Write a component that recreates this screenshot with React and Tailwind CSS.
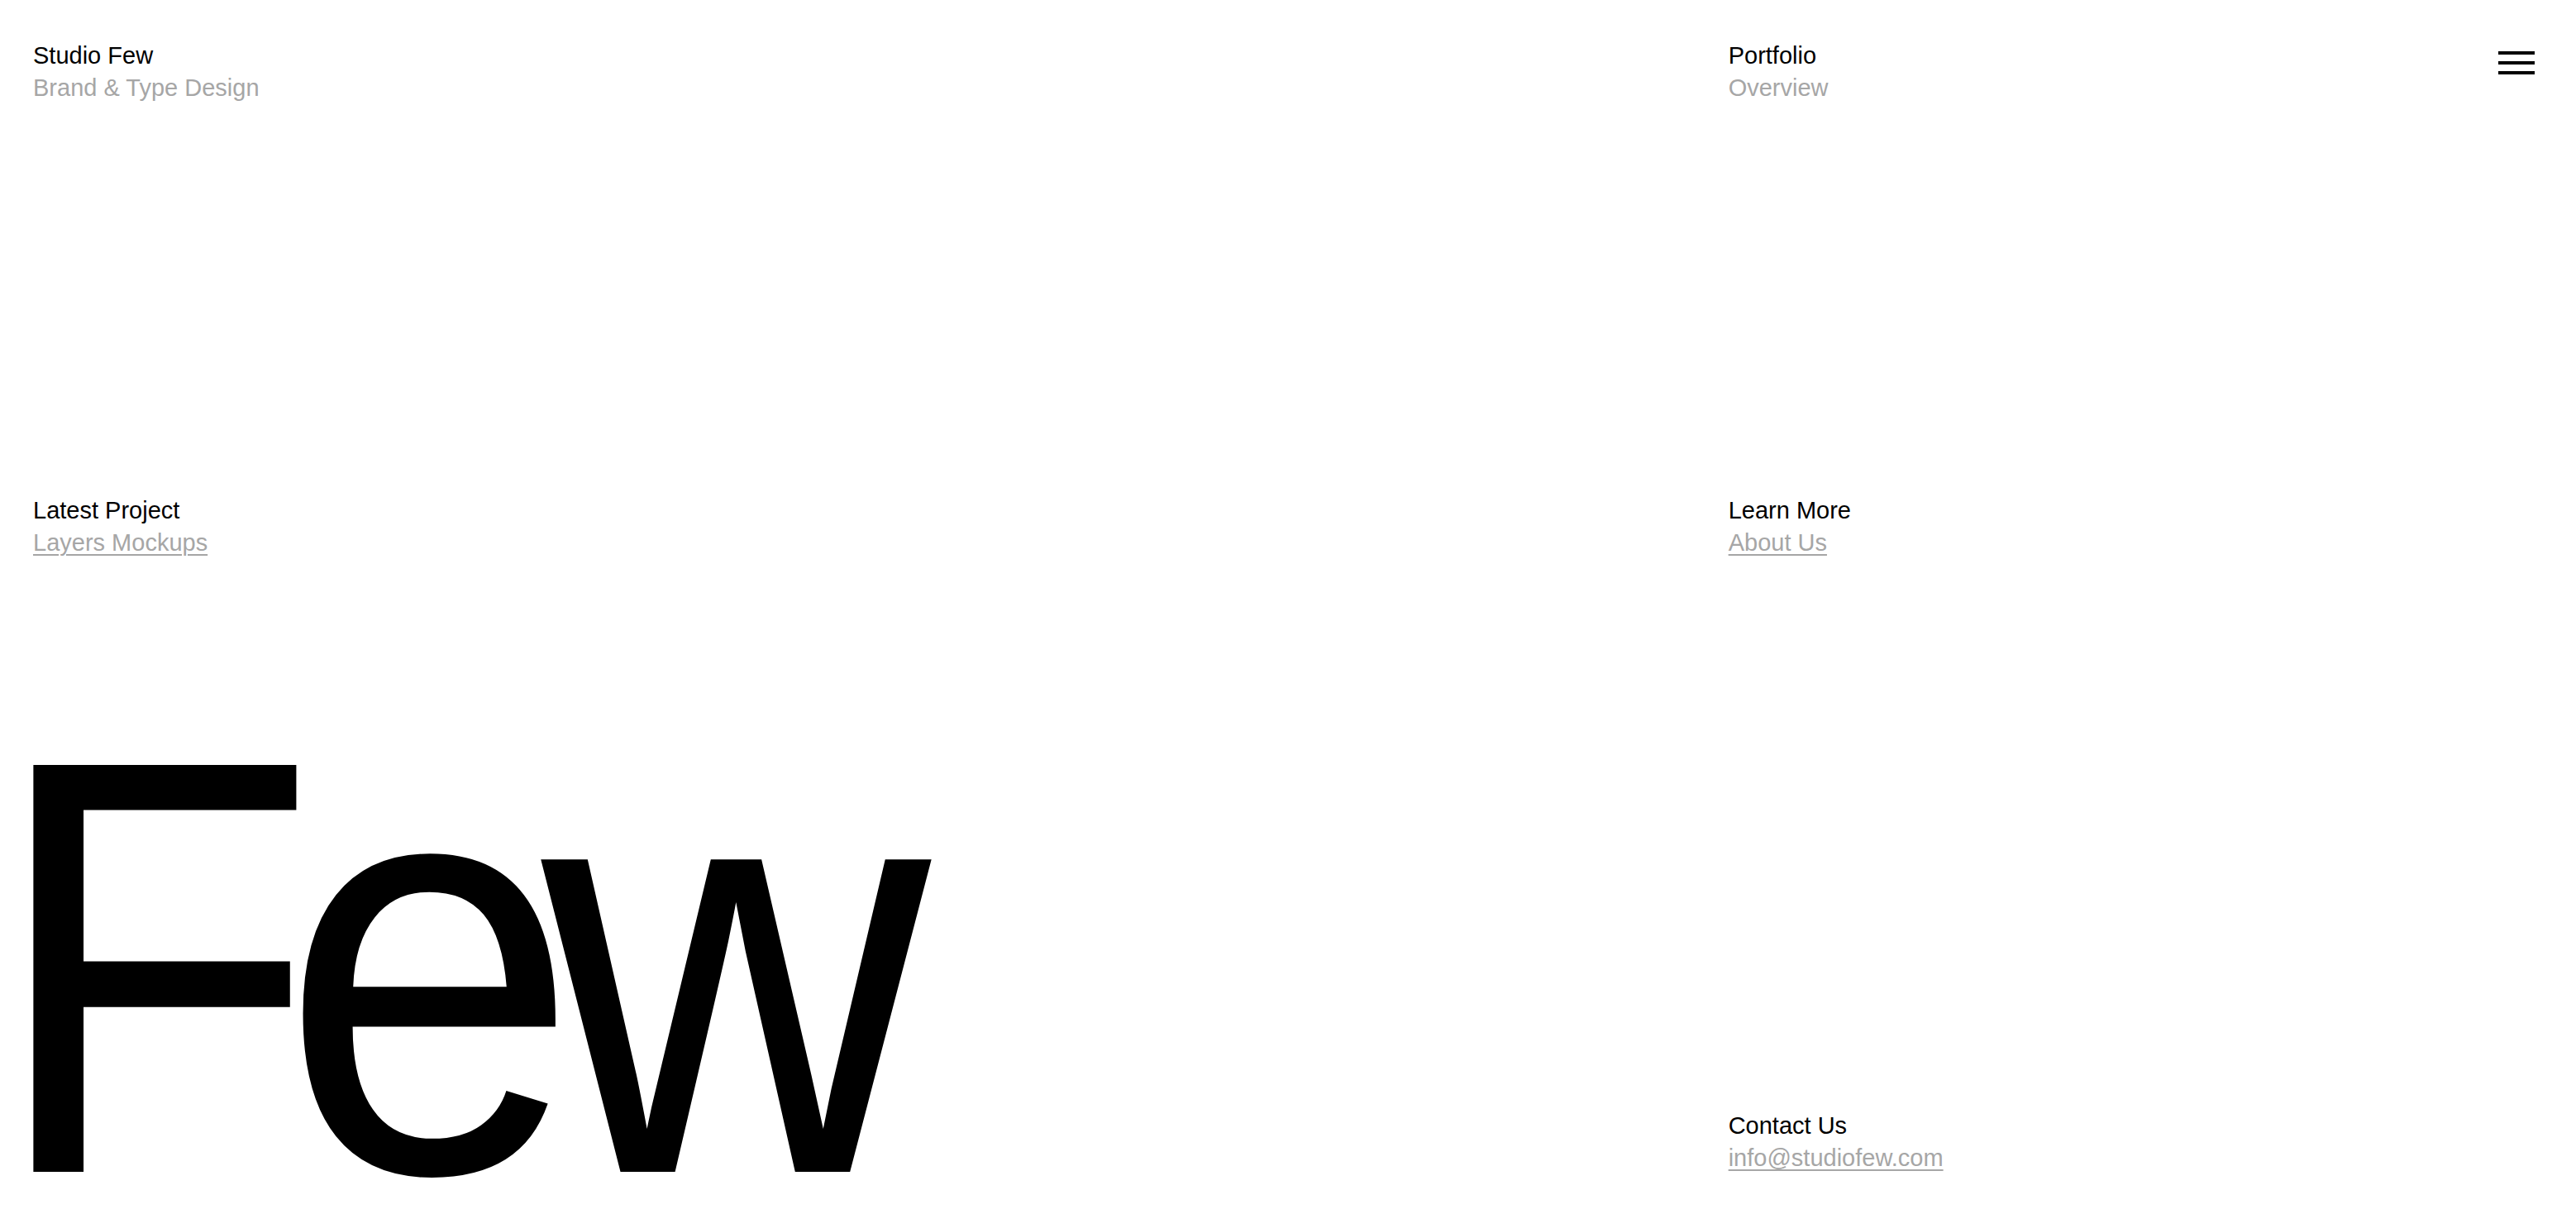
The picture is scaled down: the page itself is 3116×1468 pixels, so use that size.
import React from "react";

function Block({ title, sub, link }) {
  return (
    <div className="text-[29px] leading-[39px]">
      <div className="text-black">{title}</div>
      {link ? (
        <a
          href="#"
          className="text-[#a6a6a6] underline decoration-2 underline-offset-[4px]"
        >
          {sub}
        </a>
      ) : (
        <div className="text-[#a6a6a6]">{sub}</div>
      )}
    </div>
  );
}

export default function App() {
  return (
    <div
      className="h-screen w-full bg-white flex flex-col px-10 pt-12 pb-12"
      style={{ fontFamily: '"Liberation Sans", Arial, sans-serif' }}
    >
      <div className="grid grid-cols-12 gap-x-10">
        <div className="col-span-8">
          <Block title="Studio Few" sub="Brand & Type Design" />
        </div>
        <div className="col-span-3">
          <Block title="Portfolio" sub="Overview" />
        </div>
        <div className="col-span-1 flex justify-end">
          <button className="mt-[14px] mr-[10px] flex flex-col gap-2 w-[44px]" aria-label="Menu">
            <span className="block h-1 w-full bg-black" />
            <span className="block h-1 w-full bg-black" />
            <span className="block h-1 w-full bg-black" />
          </button>
        </div>
      </div>

      <div className="grid grid-cols-12 gap-x-10 mt-[472px]">
        <div className="col-span-8">
          <Block title="Latest Project" sub="Layers Mockups" link />
        </div>
        <div className="col-span-4">
          <Block title="Learn More" sub="About Us" link />
        </div>
      </div>

      <div className="flex-1" />

      <div className="grid grid-cols-12 gap-x-10 items-end">
        <div className="col-span-8">
          <div className="text-[715px] leading-[572px] -mb-[36px] tracking-[-0.07em] text-black scale-x-[0.91] origin-left -ml-[53px] whitespace-nowrap">
            Few
          </div>
        </div>
        <div className="col-span-4">
          <Block title="Contact Us" sub="info@studiofew.com" link />
        </div>
      </div>
    </div>
  );
}
